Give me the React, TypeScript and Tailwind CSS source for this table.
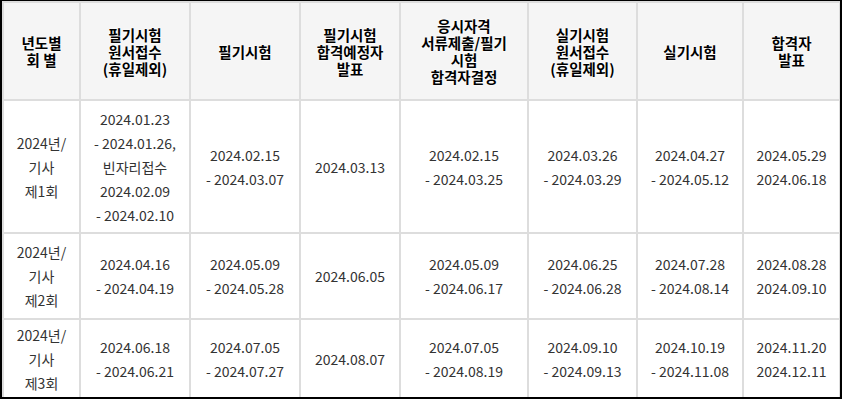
import React from "react";

const headers: string[][] = [
  ["년도별", "회 별"],
  ["필기시험", "원서접수", "(휴일제외)"],
  ["필기시험"],
  ["필기시험", "합격예정자", "발표"],
  ["응시자격", "서류제출/필기", "시험", "합격자결정"],
  ["실기시험", "원서접수", "(휴일제외)"],
  ["실기시험"],
  ["합격자", "발표"],
];

const rows: { h: number; cells: string[][] }[] = [
  {
    h: 133,
    cells: [
      ["2024년/", "기사", "제1회"],
      ["2024.01.23", "- 2024.01.26,", "빈자리접수", "2024.02.09", "- 2024.02.10"],
      ["2024.02.15", "- 2024.03.07"],
      ["2024.03.13"],
      ["2024.02.15", "- 2024.03.25"],
      ["2024.03.26", "- 2024.03.29"],
      ["2024.04.27", "- 2024.05.12"],
      ["2024.05.29", "2024.06.18"],
    ],
  },
  {
    h: 86,
    cells: [
      ["2024년/", "기사", "제2회"],
      ["2024.04.16", "- 2024.04.19"],
      ["2024.05.09", "- 2024.05.28"],
      ["2024.06.05"],
      ["2024.05.09", "- 2024.06.17"],
      ["2024.06.25", "- 2024.06.28"],
      ["2024.07.28", "- 2024.08.14"],
      ["2024.08.28", "2024.09.10"],
    ],
  },
  {
    h: 80,
    cells: [
      ["2024년/", "기사", "제3회"],
      ["2024.06.18", "- 2024.06.21"],
      ["2024.07.05", "- 2024.07.27"],
      ["2024.08.07"],
      ["2024.07.05", "- 2024.08.19"],
      ["2024.09.10", "- 2024.09.13"],
      ["2024.10.19", "- 2024.11.08"],
      ["2024.11.20", "2024.12.11"],
    ],
  },
];

const widths = [77, 110, 110, 100, 128, 109, 106, 97];

export default function App() {
  return (
    <div className="w-[843px] h-[400px] bg-white">
      <div
        className="w-[842px] h-[399px] border-l-2 border-r-2 border-b-2 border-t border-black overflow-hidden bg-white"
        style={{ fontFamily: '"Noto Sans CJK KR", "Noto Sans", sans-serif' }}
      >
        <table className="border-collapse table-fixed w-[837px]">
          <colgroup>
            {widths.map((w, i) => (
              <col key={i} style={{ width: w }} />
            ))}
          </colgroup>
          <thead>
            <tr className="h-[98px] bg-[#f5f5f5]">
              {headers.map((lines, i) => (
                <th
                  key={i}
                  className="border-2 border-[#dddddd] p-0 align-middle text-center text-[14.5px] font-bold leading-[17px] text-black [text-shadow:0_0_3px_#fff,0_0_2px_#fff]"
                >
                  {lines.map((l, j) => (
                    <div key={j} className="whitespace-nowrap">
                      {l}
                    </div>
                  ))}
                </th>
              ))}
            </tr>
          </thead>
          <tbody>
            {rows.map((r, ri) => (
              <tr key={ri} style={{ height: r.h }}>
                {r.cells.map((lines, ci) => (
                  <td
                    key={ci}
                    className="border-2 border-[#dddddd] p-0 align-middle text-center text-[14px] leading-[24px] text-[#333333]"
                  >
                    {lines.map((l, j) => (
                      <div key={j} className="whitespace-nowrap">
                        {l}
                      </div>
                    ))}
                  </td>
                ))}
              </tr>
            ))}
          </tbody>
        </table>
      </div>
    </div>
  );
}
